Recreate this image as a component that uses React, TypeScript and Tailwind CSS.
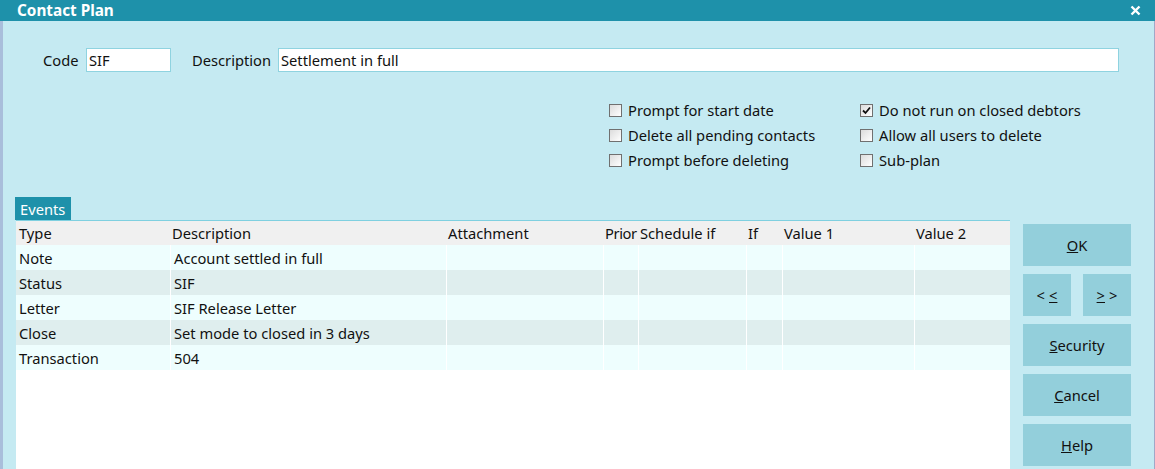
import React from "react";

const cols = [154, 276, 157, 35, 108, 36, 132, 96];
const headers = ["Type", "Description", "Attachment", "Prior", "Schedule if", "If", "Value 1", "Value 2"];
const rows = [
  ["Note", "Account settled in full"],
  ["Status", "SIF"],
  ["Letter", "SIF Release Letter"],
  ["Close", "Set mode to closed in 3 days"],
  ["Transaction", "504"],
];

function Check({ checked }: { checked?: boolean }) {
  return (
    <div className="w-[13px] h-[13px] border border-[#707070] bg-gradient-to-br from-[#dcdcdc] to-white flex items-center justify-center">
      {checked && (
        <svg width="9" height="9" viewBox="0 0 9 9">
          <path d="M1 4.5 L3.5 7 L8 1.5" fill="none" stroke="#111" strokeWidth="1.8" />
        </svg>
      )}
    </div>
  );
}

function CB({ label, checked }: { label: string; checked?: boolean }) {
  return (
    <div className="flex items-center h-[25px]">
      <Check checked={checked} />
      <span className="ml-[6px] text-[14.7px] text-[#111]">{label}</span>
    </div>
  );
}

function Btn({ children, w = "w-[108px]" }: { children: React.ReactNode; w?: string }) {
  return (
    <div className={`${w} h-[42px] bg-[#93cfdb] flex items-center justify-center text-[14.7px] text-[#111]`}>
      {children}
    </div>
  );
}

export default function App() {
  return (
    <div
      className="w-[1155px] h-[469px] overflow-hidden bg-[#c5eaf2] flex flex-col"
      style={{ fontFamily: '"Noto Sans", "Open Sans", sans-serif' }}
    >
      <div className="h-[21px] bg-[#1e91aa] flex items-center justify-between pl-[17px] pr-[14px] shrink-0">
        <span className="text-white font-bold text-[15.3px] leading-none">Contact Plan</span>
        <svg width="11" height="11" viewBox="0 0 11 11">
          <path d="M1.5 1.5 L9.5 9.5 M9.5 1.5 L1.5 9.5" stroke="white" strokeWidth="2.4" />
        </svg>
      </div>
      <div className="flex flex-1 min-h-0">
        <div className="w-[3px] bg-[#a9bedb] shrink-0" />
        <div className="flex-1 flex flex-col">
          <div className="flex items-center mt-[27px] h-[24px]">
            <span className="ml-[40px] w-[43px] text-[14.7px] text-[#111]">Code</span>
            <div className="w-[85px] h-[24px] bg-white border border-[#8fd3e0] flex items-center px-[2px] text-[14.7px] text-[#111]">
              SIF
            </div>
            <span className="ml-[21px] w-[86px] text-[14.7px] text-[#111]">Description</span>
            <div className="w-[841px] h-[24px] bg-white border border-[#8fd3e0] flex items-center px-[2px] text-[14.7px] text-[#111]">
              Settlement in full
            </div>
          </div>
          <div className="flex mt-[26px] ml-[606px]">
            <div className="flex flex-col w-[251px]">
              <CB label="Prompt for start date" />
              <CB label="Delete all pending contacts" />
              <CB label="Prompt before deleting" />
            </div>
            <div className="flex flex-col">
              <CB label="Do not run on closed debtors" checked />
              <CB label="Allow all users to delete" />
              <CB label="Sub-plan" />
            </div>
          </div>
          <div className="mt-[24px] ml-[12px] w-[56px] h-[23px] bg-[#1e91aa] text-white text-[14.7px] flex items-center pl-[5px] pt-[1px]">
            Events
          </div>
          <div className="flex flex-1 min-h-0">
            <div className="ml-[13px] w-[994px] bg-white border-t border-[#7fd0e0] flex flex-col">
              <div className="flex h-[24px] bg-[#f0f0f0] items-center pt-[1px]">
                {headers.map((h, i) => (
                  <div
                    key={h}
                    style={{ width: cols[i] }}
                    className={`shrink-0 text-[14.7px] text-[#111] whitespace-nowrap ${i === 0 ? "pl-[3px]" : "pl-[2px]"} ${h === "Prior" ? "tracking-[-0.4px]" : ""}`}
                  >
                    {h}
                  </div>
                ))}
              </div>
              {rows.map((r, ri) => (
                <div key={ri} className={`flex h-[25px] ${ri % 2 === 0 ? "bg-[#eefefe]" : "bg-[#dfeeee]"}`}>
                  {cols.map((w, i) => (
                    <div
                      key={i}
                      style={{ width: w }}
                      className={`shrink-0 h-full flex items-center pl-[3px] pt-[2px] text-[14.7px] text-[#111] whitespace-nowrap ${i > 0 ? "border-l border-white" : ""}`}
                    >
                      {r[i] ?? ""}
                    </div>
                  ))}
                </div>
              ))}
            </div>
            <div className="ml-[13px] mt-[4px] flex flex-col gap-[8px]">
              <Btn><span><u>O</u>K</span></Btn>
              <div className="flex gap-[12px]">
                <Btn w="w-[48px]"><span>&lt;<u className="ml-[4px]">&lt;</u></span></Btn>
                <Btn w="w-[48px]"><span><u className="mr-[4px]">&gt;</u>&gt;</span></Btn>
              </div>
              <Btn><span><u>S</u>ecurity</span></Btn>
              <Btn><span><u>C</u>ancel</span></Btn>
              <Btn><span><u>H</u>elp</span></Btn>
            </div>
          </div>
        </div>
        <div className="w-[1px] bg-[#a0a8c8] shrink-0 ml-auto" />
      </div>
    </div>
  );
}
